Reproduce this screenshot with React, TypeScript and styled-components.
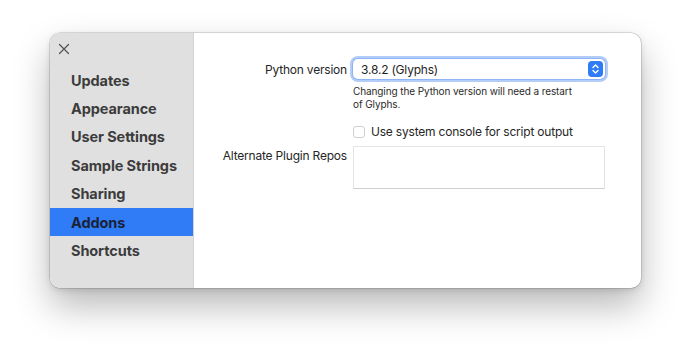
import styled, { createGlobalStyle } from "styled-components";

const Global = createGlobalStyle`
  html, body {
    margin: 0;
    padding: 0;
    background: #ffffff;
    font-family: Inter, "Liberation Sans", sans-serif;
    -webkit-font-smoothing: antialiased;
  }
`;

const Page = styled.div`
  width: 690px;
  height: 352px;
  padding: 33px 0 0 50px;
  box-sizing: border-box;
`;

const Window = styled.div`
  display: flex;
  width: 591px;
  height: 255px;
  border-radius: 10px;
  overflow: hidden;
  background: #ffffff;
  box-shadow: 0 0 0 0.5px rgba(0, 0, 0, 0.22), 0 18px 36px rgba(0, 0, 0, 0.28),
    0 2px 6px rgba(0, 0, 0, 0.12);
`;

const Sidebar = styled.div`
  width: 143px;
  flex-shrink: 0;
  background: #e0e0e0;
  border-right: 1px solid #d2d2d2;
  display: flex;
  flex-direction: column;
`;

const CloseRow = styled.div`
  height: 31px;
  display: flex;
  align-items: center;
  padding-left: 8px;
  padding-top: 1px;
  box-sizing: border-box;
`;

const Nav = styled.div`
  display: flex;
  flex-direction: column;
  padding-top: 2px;
`;

const NavItem = styled.div<{ $active?: boolean }>`
  height: 28.4px;
  display: flex;
  align-items: center;
  padding-left: 21px;
  font-size: 14.5px;
  font-weight: 700;
  color: ${(p) => (p.$active ? "#1a2238" : "#3c3c3c")};
  background: ${(p) => (p.$active ? "#2f7cf6" : "transparent")};
  letter-spacing: -0.1px;
`;

const Content = styled.div`
  flex: 1;
  padding-top: 26px;
`;

const Form = styled.div`
  display: grid;
  grid-template-columns: 153px 252px;
  column-gap: 6px;
  align-items: start;
`;

const Label = styled.div<{ $top?: number }>`
  text-align: right;
  font-size: 12px;
  letter-spacing: -0.2px;
  color: #262626;
  padding-top: ${(p) => p.$top ?? 0}px;
`;

const Popup = styled.div`
  height: 20px;
  border-radius: 5px;
  background: #fff;
  box-shadow: 0 0 0 1px #8fb4f5, 0 0 0 3px #b3cdf8;
  display: flex;
  align-items: center;
  justify-content: space-between;
  padding: 0 2px 0 8px;
  box-sizing: border-box;
  font-size: 12px;
  letter-spacing: -0.2px;
  color: #1e1e1e;
`;

const Stepper = styled.div`
  width: 15px;
  height: 16px;
  border-radius: 4px;
  background: #2f7cf6;
  display: flex;
  align-items: center;
  justify-content: center;
`;

const Help = styled.div`
  grid-column: 2;
  margin-top: 6px;
  font-size: 10px;
  letter-spacing: -0.1px;
  line-height: 12.5px;
  color: #2a2a2a;
  width: 226px;
`;

const CheckRow = styled.div`
  grid-column: 2;
  margin-top: 14px;
  display: flex;
  align-items: center;
  gap: 6px;
  font-size: 12px;
  letter-spacing: -0.2px;
  color: #262626;
`;

const Box = styled.div`
  width: 12px;
  height: 12px;
  border-radius: 3px;
  border: 1px solid #cfcfcf;
  background: #fff;
  box-sizing: border-box;
`;

const TextArea = styled.div`
  margin-top: 7px;
  height: 43px;
  border: 1px solid #e4e4e4;
  border-bottom-color: #cfcfcf;
  background: #fff;
  box-sizing: border-box;
`;

export default function App() {
  const pages = [
    "Updates",
    "Appearance",
    "User Settings",
    "Sample Strings",
    "Sharing",
    "Addons",
    "Shortcuts",
  ];
  return (
    <Page>
      <Global />
      <Window>
        <Sidebar>
          <CloseRow>
            <svg width="12" height="12" viewBox="0 0 12 12">
              <path d="M1.5 1.5 L10.5 10.5 M10.5 1.5 L1.5 10.5" stroke="#555" strokeWidth="1.3" strokeLinecap="round" />
            </svg>
          </CloseRow>
          <Nav>
            {pages.map((p) => (
              <NavItem key={p} $active={p === "Addons"}>
                {p}
              </NavItem>
            ))}
          </Nav>
        </Sidebar>
        <Content>
          <Form>
            <Label $top={3}>Python version</Label>
            <Popup>
              <span>3.8.2 (Glyphs)</span>
              <Stepper>
                <svg width="9" height="12" viewBox="0 0 9 12">
                  <path d="M2 4.5 L4.5 2 L7 4.5 M2 7.5 L4.5 10 L7 7.5" stroke="#fff" strokeWidth="1.4" fill="none" strokeLinecap="round" strokeLinejoin="round" />
                </svg>
              </Stepper>
            </Popup>
            <Help>Changing the Python version will need a restart of Glyphs.</Help>
            <CheckRow>
              <Box />
              <span>Use system console for script output</span>
            </CheckRow>
            <Label $top={9}>Alternate Plugin Repos</Label>
            <TextArea />
          </Form>
        </Content>
      </Window>
    </Page>
  );
}
